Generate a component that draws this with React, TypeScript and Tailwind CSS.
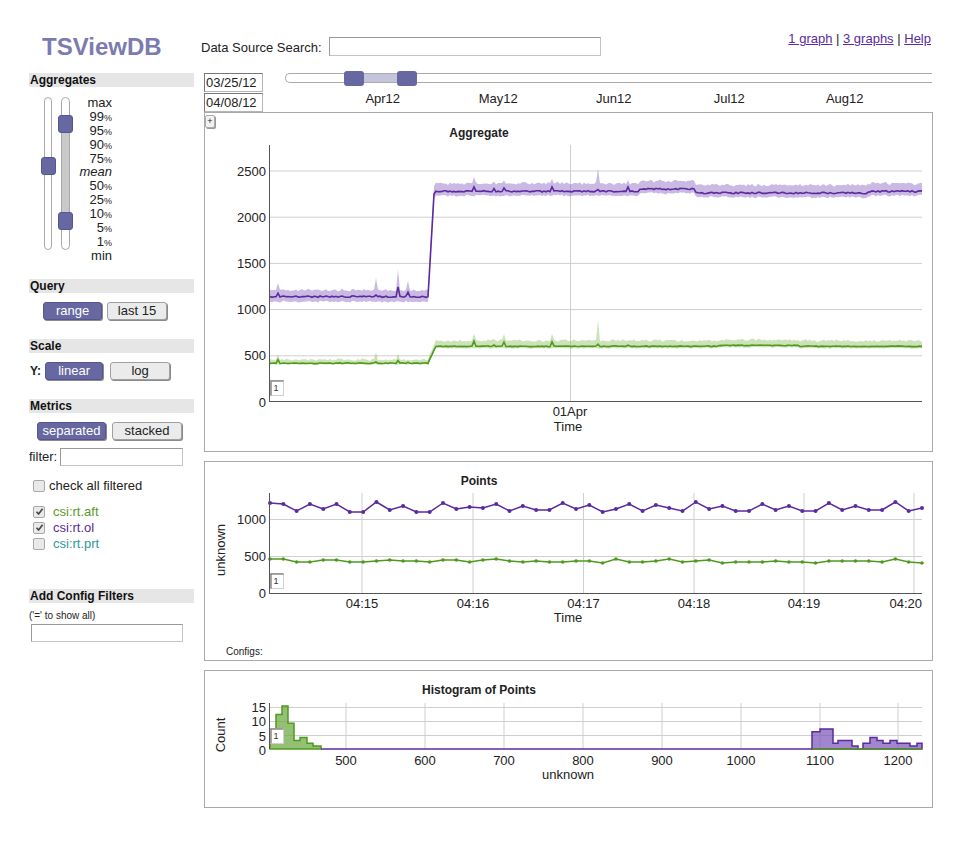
import React from 'react';

const PURPLE = '#5b2a9e';
const GREEN = '#4f9a1c';

function mulberry32(seed: number) {
  let a = seed;
  return () => {
    a |= 0;
    a = (a + 0x6d2b79f5) | 0;
    let t = Math.imul(a ^ (a >>> 15), 1 | a);
    t = (t + Math.imul(t ^ (t >>> 7), 61 | t)) ^ t;
    return ((t ^ (t >>> 14)) >>> 0) / 4294967296;
  };
}

const ay = (v: number) => 402 - v * 0.0924;

type Spike = { x: number; pm?: number; pu?: number; gm?: number; gu?: number };
const spikes: Spike[] = [
  { x: 278, pm: 40, pu: 30, gm: 35, gu: 20 },
  { x: 376, pm: 20, pu: 120, gm: 10, gu: 70 },
  { x: 398, pm: 100, pu: 110, gm: 30, gu: 40 },
  { x: 408, pm: 55, pu: 40, gm: 10 },
  { x: 474, pm: 55, pu: 20, gm: 60, gu: 20 },
  { x: 494, pm: 25, gm: 15 },
  { x: 504, pm: 40, gm: 45, gu: 20 },
  { x: 552, pm: 45, gm: 50, gu: 15 },
  { x: 598, pm: 20, pu: 150, gm: 25, gu: 200 },
  { x: 628, pm: 50, gm: 10 },
];

type Pt = { x: number; m: number; u: number; l: number };

function buildAgg() {
  const r = mulberry32(11);
  const P: Pt[] = [];
  const G: Pt[] = [];
  for (let x = 270; x <= 922; x += 2) {
    let pm: number;
    let gm: number;
    if (x < 428) {
      pm = 1140;
      gm = 420;
    } else if (x < 436) {
      const t = (x - 428) / 8;
      pm = 1140 + Math.min(1, t * 1.3) * 1140;
      gm = 420 + t * 185;
    } else {
      pm = x >= 640 && x < 696 ? 2305 : x >= 696 && x < 870 ? 2262 : 2280;
      gm = x >= 720 && x < 800 ? 612 : 603;
    }
    pm += (r() - 0.5) * 16;
    gm += (r() - 0.5) * 8;
    const hi = x >= 430;
    let pu = pm + (hi ? 75 : 62) + r() * 22;
    const pl = pm - (hi ? 40 : 48) - r() * 12;
    let gu = gm + (hi ? 50 : 28) + r() * 22;
    const gl = gm - (hi ? 18 : 10) - r() * 6;
    const s = spikes.find((k) => k.x === x);
    if (s) {
      pm += s.pm || 0;
      pu += (s.pm || 0) + (s.pu || 0);
      gm += s.gm || 0;
      gu += (s.gm || 0) + (s.gu || 0);
    }
    P.push({ x, m: ay(pm), u: ay(pu), l: ay(pl) });
    G.push({ x, m: ay(gm), u: ay(gu), l: ay(gl) });
  }
  return { P, G };
}

const line = (pts: { x: number; y: number }[]) =>
  pts.map((p, i) => `${i ? 'L' : 'M'}${p.x.toFixed(1)},${p.y.toFixed(1)}`).join(' ');

const band = (pts: Pt[]) => {
  const up = pts.map((p, i) => `${i ? 'L' : 'M'}${p.x},${p.u.toFixed(1)}`).join(' ');
  const lo = [...pts].reverse().map((p) => `L${p.x},${p.l.toFixed(1)}`).join(' ');
  return `${up} ${lo} Z`;
};

const AGG = buildAgg();

const purpleY = [503, 504, 511, 504, 509, 504, 512, 512, 502, 510, 506, 512, 512, 503, 509, 507, 508, 504, 511, 506, 510, 510, 503, 509, 505, 512, 509, 504, 511, 505, 508, 511, 502, 509, 506, 511, 511, 504, 510, 506, 511, 511, 503, 510, 506, 510, 510, 502, 511, 508];
const greenY = [559, 559, 562, 562, 560, 560, 562, 562, 561, 560, 561, 561, 562, 560, 560, 562, 560, 559, 561, 562, 561, 562, 562, 561, 561, 563, 559, 562, 562, 561, 559, 562, 561, 560, 563, 562, 562, 562, 561, 562, 562, 563, 561, 561, 561, 561, 562, 559, 562, 563];
const ptX = (i: number) => 270 + (i * (922 - 270)) / 49;

const hy = (v: number) => 749 - v * 2.87;
function stepPath(edges: number[], vals: number[]) {
  let d = `M${edges[0]},749`;
  vals.forEach((v, i) => {
    d += ` L${edges[i]},${hy(v).toFixed(1)} L${edges[i + 1]},${hy(v).toFixed(1)}`;
  });
  d += ` L${edges[edges.length - 1]},749 Z`;
  return d;
}
const gEdges = [270, 276, 282, 288, 294, 300, 307, 313, 321];
const gVals = [5, 12, 15, 9, 3, 4, 2, 1];
const pEdges = [812, 820, 833, 838, 852, 858, 863, 870, 877, 883, 890, 897, 910, 917, 922];
const pVals = [6, 7, 2, 3, 1, 0, 2, 4, 3, 2, 3, 2, 1, 2];

function T({ x, y, children, anchor = 'middle', size = 13, bold = false }: { x: number; y: number; children: React.ReactNode; anchor?: 'start' | 'middle' | 'end'; size?: number; bold?: boolean }) {
  return (
    <text x={x} y={y + size * 0.36} textAnchor={anchor} fontSize={size} fontWeight={bold ? 700 : 400} fill="#222">
      {children}
    </text>
  );
}

function OneBox({ x, y }: { x: number; y: number }) {
  return (
    <g>
      <rect x={x + 0.5} y={y + 0.5} width={13} height={15} fill="white" stroke="#d0d0d0" />
      <path d={`M${x + 1},${y + 15.5} V${y + 1} H${x + 13.5}`} stroke="#8a8a8a" strokeWidth={1.5} fill="none" />
      <text x={x + 3.5} y={y + 11} fontSize={9} fill="#333">1</text>
    </g>
  );
}

function AggChart() {
  const grid = [2500, 2000, 1500, 1000, 500];
  return (
    <svg width={727} height={338} className="block">
      <g transform="translate(-205 -113)">
        <T x={479} y={133} size={12} bold>Aggregate</T>
        {grid.map((v) => (
          <line key={v} x1={269} x2={922} y1={ay(v)} y2={ay(v)} stroke="#cfcfcf" />
        ))}
        <line x1={570.5} x2={570.5} y1={145} y2={402} stroke="#cfcfcf" />
        <path d={band(AGG.P)} fill="#8a66c0" fillOpacity={0.45} />
        <path d={band(AGG.G)} fill="#7fb64f" fillOpacity={0.4} />
        <path d={line(AGG.P.map((p) => ({ x: p.x, y: p.m })))} stroke={PURPLE} strokeWidth={1.6} fill="none" />
        <path d={line(AGG.G.map((p) => ({ x: p.x, y: p.m })))} stroke={GREEN} strokeWidth={1.6} fill="none" />
        <line x1={269.5} x2={269.5} y1={145} y2={402} stroke="#555" />
        <line x1={269} x2={922} y1={401.5} y2={401.5} stroke="#555" />
        {[2500, 2000, 1500, 1000, 500, 0].map((v) => (
          <T key={v} x={266} y={ay(v)} anchor="end">{v}</T>
        ))}
        <T x={570} y={411}>01Apr</T>
        <T x={568} y={426}>Time</T>
        <OneBox x={270} y={380} />
      </g>
    </svg>
  );
}

function PointsChart() {
  const vx = [362, 473, 583.5, 694, 804, 914];
  const labels = ['04:15', '04:16', '04:17', '04:18', '04:19'];
  const pp = purpleY.map((y, i) => ({ x: ptX(i), y }));
  const gp = greenY.map((y, i) => ({ x: ptX(i), y }));
  return (
    <svg width={727} height={198} className="block">
      <g transform="translate(-205 -462)">
        <T x={479} y={481} size={12} bold>Points</T>
        {[519, 556].map((y) => (
          <line key={y} x1={269} x2={922} y1={y + 0.5} y2={y + 0.5} stroke="#cfcfcf" />
        ))}
        {vx.map((x) => (
          <line key={x} x1={x} x2={x} y1={493} y2={593} stroke="#cfcfcf" />
        ))}
        <path d={line(pp)} stroke={PURPLE} strokeWidth={1.5} fill="none" />
        {pp.map((p, i) => (
          <circle key={i} cx={p.x} cy={p.y} r={2} fill={PURPLE} />
        ))}
        <path d={line(gp)} stroke={GREEN} strokeWidth={1.5} fill="none" />
        {gp.map((p, i) => (
          <circle key={i} cx={p.x} cy={p.y} r={1.8} fill={GREEN} />
        ))}
        <line x1={269.5} x2={269.5} y1={493} y2={593} stroke="#555" />
        <line x1={269} x2={922} y1={593.5} y2={593.5} stroke="#555" />
        <T x={266} y={519} anchor="end">1000</T>
        <T x={266} y={556} anchor="end">500</T>
        <T x={266} y={593} anchor="end">0</T>
        {labels.map((l, i) => (
          <T key={l} x={vx[i]} y={603}>{l}</T>
        ))}
        <T x={922} y={603} anchor="end">04:20</T>
        <T x={568} y={617}>Time</T>
        <g transform="rotate(-90 222 550)">
          <T x={222} y={548}>unknown</T>
        </g>
        <T x={226} y={651} size={10} anchor="start">Configs:</T>
        <OneBox x={270} y={573} />
      </g>
    </svg>
  );
}

function HistChart() {
  const vx = [346, 425, 504, 583, 662, 741, 820, 898];
  const lab = ['500', '600', '700', '800', '900', '1000', '1100', '1200'];
  return (
    <svg width={727} height={136} className="block">
      <g transform="translate(-205 -671)">
        <T x={479} y={690} size={12} bold>Histogram of Points</T>
        {[707, 721, 735].map((y) => (
          <line key={y} x1={269} x2={922} y1={y + 0.5} y2={y + 0.5} stroke="#cfcfcf" />
        ))}
        {vx.map((x) => (
          <line key={x} x1={x} x2={x} y1={703} y2={749} stroke="#cfcfcf" />
        ))}
        <path d={stepPath(gEdges, gVals)} fill="#6aa83c" fillOpacity={0.72} stroke={GREEN} strokeWidth={1.5} />
        <path d={stepPath(pEdges, pVals)} fill="#7b52b8" fillOpacity={0.7} stroke={PURPLE} strokeWidth={1.5} />
        <line x1={812} x2={922} y1={749} y2={749} stroke={GREEN} strokeWidth={1.5} />
        <line x1={321} x2={812} y1={749} y2={749} stroke={PURPLE} strokeWidth={1.5} />
        <line x1={269.5} x2={269.5} y1={703} y2={749} stroke="#555" />
        <T x={266} y={707} anchor="end">15</T>
        <T x={266} y={721.5} anchor="end">10</T>
        <T x={266} y={736} anchor="end">5</T>
        <T x={266} y={750} anchor="end">0</T>
        {lab.map((l, i) => (
          <T key={l} x={vx[i]} y={760}>{l}</T>
        ))}
        <T x={568} y={774}>unknown</T>
        <g transform="rotate(-90 222 735)">
          <T x={222} y={733}>Count</T>
        </g>
        <OneBox x={270} y={728} />
      </g>
    </svg>
  );
}

function SectionHeader({ children, className = '' }: { children: React.ReactNode; className?: string }) {
  return <div className={`h-[14px] bg-[#e6e6e6] pl-[1px] text-[12px] leading-[14px] font-bold text-[#111] ${className}`}>{children}</div>;
}

function Btn({ on, w, children }: { on?: boolean; w: string; children: React.ReactNode }) {
  return (
    <div
      className={`${w} h-[18px] rounded-[3px] border text-center text-[13px] leading-[16px] shadow-[1px_1px_0_#8a8a8a] ${
        on ? 'bg-[#6767a1] border-[#56568e] text-white' : 'bg-[#ebebeb] border-[#a0a0a0] text-[#222]'
      }`}
    >
      {children}
    </div>
  );
}

function Check({ on }: { on?: boolean }) {
  return (
    <span className="flex h-[12px] w-[12px] items-center justify-center rounded-[2px] border border-[#a8a8a8] bg-[#e9e9e9]">
      {on && (
        <svg width="9" height="9" viewBox="0 0 9 9">
          <path d="M1.5 4.8 L3.6 7 L7.6 1.8" stroke="#444" strokeWidth="1.6" fill="none" />
        </svg>
      )}
    </span>
  );
}

function DateBox({ value, className = '' }: { value: string; className?: string }) {
  return (
    <input
      readOnly
      value={value}
      className={`h-[19px] w-[59px] border border-[#b5b5b5] border-t-[#777] border-l-[#777] px-[1px] text-[13px] leading-[17px] text-[#222] outline-none ${className}`}
    />
  );
}

const aggLabels: [string, boolean][] = [
  ['max', false], ['99', true], ['95', true], ['90', true], ['75', true], ['mean', false],
  ['50', true], ['25', true], ['10', true], ['5', true], ['1', true], ['min', false],
];

const months = ['Apr12', 'May12', 'Jun12', 'Jul12', 'Aug12'];

export default function App() {
  return (
    <div className="h-[848px] w-[962px] overflow-hidden bg-white font-['Liberation_Sans',Arial,sans-serif] text-[13px] text-[#222]">
      <header className="flex h-[70px] items-start pt-[31px]">
        <div className="ml-[42px] mt-[2px] w-[159px] text-[24px] font-bold leading-[28px] text-[#7b7bb0]">TSViewDB</div>
        <div className="mt-[9px] leading-[15px]">Data Source Search:</div>
        <input className="ml-[7px] mt-[6px] h-[19px] w-[272px] border border-[#c4c4c4] border-t-[#999] border-l-[#999] outline-none" />
        <div className="ml-auto mr-[31px] leading-[15px]">
          <a className="text-[#5b2a9e] underline">1 graph</a> | <a className="text-[#5b2a9e] underline">3 graphs</a> |{' '}
          <a className="text-[#5b2a9e] underline">Help</a>
        </div>
      </header>

      <div className="flex">
        <aside className="ml-[29px] flex w-[165px] flex-col">
          <SectionHeader className="mt-[3px]">Aggregates</SectionHeader>
          <div className="flex h-[192px]">
            <div className="flex w-[44px] items-start">
              <div className="relative ml-[15px] mt-[10px] h-[153px] w-[8px] rounded-full border border-[#a8a8a8] bg-white">
                <div className="absolute left-[-4px] top-[59px] h-[18px] w-[15px] rounded-[3px] border border-[#56568e] bg-[#6767a1]" />
              </div>
              <div className="relative ml-[9px] mt-[10px] h-[153px] w-[9px] rounded-full border border-[#a8a8a8] bg-white">
                <div className="absolute left-0 right-0 top-[26px] h-[97px] bg-[#c9c9c9]" />
                <div className="absolute left-[-4px] top-[17px] h-[18px] w-[15px] rounded-[3px] border border-[#56568e] bg-[#6767a1]" />
                <div className="absolute left-[-4px] top-[114px] h-[18px] w-[15px] rounded-[3px] border border-[#56568e] bg-[#6767a1]" />
              </div>
            </div>
            <div className="flex w-[39px] flex-col items-end pt-[9px] text-[13px]">
              {aggLabels.map(([l, pct]) => (
                <div key={l} className={`h-[13.9px] leading-[13.9px] whitespace-nowrap ${l === 'mean' ? 'italic' : ''}`}>
                  {l}
                  {pct && <span className="text-[9px] leading-[9px]">%</span>}
                </div>
              ))}
            </div>
          </div>

          <SectionHeader>Query</SectionHeader>
          <div className="mt-[9px] flex gap-[5px] pl-[14px]">
            <Btn on w="w-[59px]">range</Btn>
            <Btn w="w-[60px]">last 15</Btn>
          </div>

          <SectionHeader className="mt-[19px]">Scale</SectionHeader>
          <div className="mt-[9px] flex items-center">
            <span className="ml-[1px] text-[12px] font-bold">Y:</span>
            <div className="ml-[4px] flex gap-[7px]">
              <Btn on w="w-[58px]">linear</Btn>
              <Btn w="w-[60px]">log</Btn>
            </div>
          </div>

          <SectionHeader className="mt-[19px]">Metrics</SectionHeader>
          <div className="mt-[9px] flex gap-[6px] pl-[8px]">
            <Btn on w="w-[69px]">separated</Btn>
            <Btn w="w-[70px]">stacked</Btn>
          </div>
          <div className="mt-[7px] flex items-center">
            <span>filter:</span>
            <input className="ml-[3px] h-[18px] w-[123px] border border-[#c4c4c4] border-t-[#999] border-l-[#999] outline-none" />
          </div>
          <div className="mt-[13px] flex h-[13px] items-center pl-[4px]">
            <Check />
            <span className="ml-[4px]">check all filtered</span>
          </div>
          <div className="mt-[11px] flex flex-col pl-[4px]">
            <div className="flex h-[16px] items-center">
              <Check on />
              <span className="ml-[8px] text-[#5a9a26]">csi:rt.aft</span>
            </div>
            <div className="flex h-[16px] items-center">
              <Check on />
              <span className="ml-[8px] text-[#5b2a9e]">csi:rt.ol</span>
            </div>
            <div className="flex h-[16px] items-center">
              <Check />
              <span className="ml-[8px] text-[#2b9a9a]">csi:rt.prt</span>
            </div>
          </div>

          <SectionHeader className="mt-[37px]">Add Config Filters</SectionHeader>
          <div className="mt-[7px] text-[10px] leading-[12px]">('=' to show all)</div>
          <input className="ml-[2px] mt-[2px] h-[18px] w-[152px] border border-[#c4c4c4] border-t-[#999] border-l-[#999] outline-none" />
        </aside>

        <main className="ml-[10px] flex w-[729px] flex-col">
          <div className="flex items-start">
            <DateBox className="mt-[3px]" value="03/25/12" />
            <div className="relative ml-[22px] mr-[1px] mt-[3px] h-[10px] flex-1 rounded-l-[5px] border border-r-0 border-[#aaa] bg-white">
              <div className="absolute bottom-0 left-[78px] top-0 w-[33px] bg-[#c4c4dc]" />
              <div className="absolute left-[58px] top-[-3px] h-[15px] w-[20px] rounded-[3px] bg-[#6767a1]" />
              <div className="absolute left-[111px] top-[-3px] h-[15px] w-[20px] rounded-[3px] bg-[#6767a1]" />
            </div>
          </div>
          <div className="mt-[1px] flex items-start">
            <DateBox value="04/08/12" />
            <div className="ml-[62px] -mt-[2px] flex leading-[15px]">
              {months.map((m) => (
                <div key={m} className="w-[115.5px] text-center">
                  {m}
                </div>
              ))}
            </div>
          </div>

          <div className="relative h-[340px] w-[729px] border border-[#aaa]">
            <AggChart />
            <div className="absolute left-0 top-[2px] h-[13px] w-[10px] rounded-[2px] border border-[#aaa] bg-[#f2f2f2] text-center text-[9px] leading-[11px] shadow-[1px_1px_0_#999]">
              +
            </div>
          </div>

          <div className="mt-[9px] h-[200px] w-[729px] border border-[#aaa]">
            <PointsChart />
          </div>

          <div className="mt-[9px] h-[138px] w-[729px] border border-[#aaa]">
            <HistChart />
          </div>
        </main>
      </div>
    </div>
  );
}
